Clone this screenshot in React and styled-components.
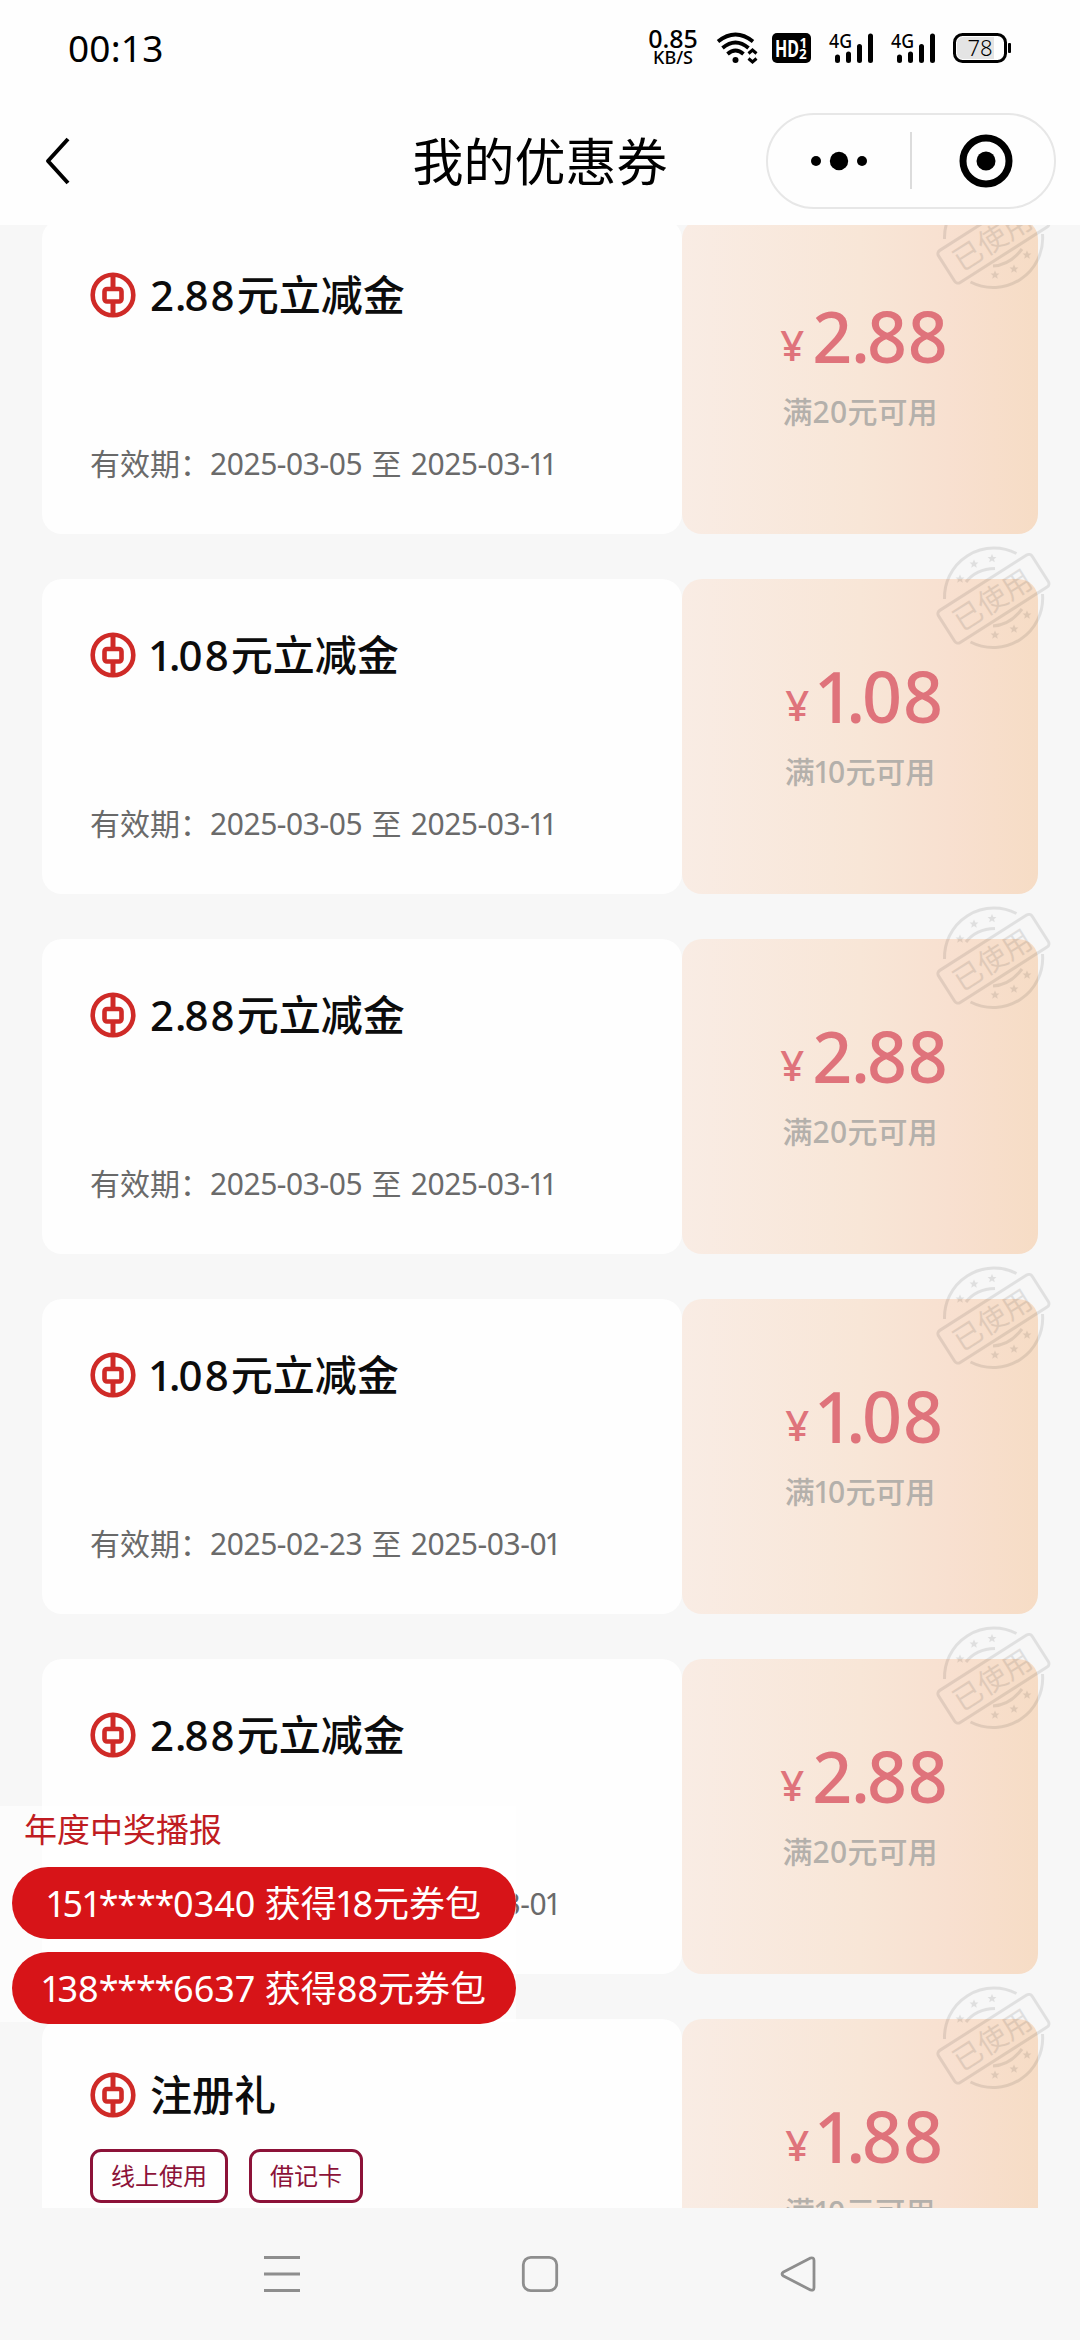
import React from 'react';
import styled, { createGlobalStyle } from 'styled-components';

const GlobalStyle = createGlobalStyle`
	* {
		box-sizing: border-box;
	}
	body {
		margin: 0;
		background: #f7f7f7;
		font-family: 'Noto Sans', 'Noto Sans CJK SC', sans-serif;
	}
`;

const Screen = styled.div`
	width: 1080px;
	height: 2340px;
	display: flex;
	flex-direction: column;
	position: relative;
	overflow: hidden;
	background: #f7f7f7;
`;

const StatusBar = styled.div`
	height: 96px;
	flex: none;
	display: flex;
	align-items: center;
	padding: 0 68px 0 68px;
	background: #fefefe;
	color: #000;
`;

const Clock = styled.span`
	font-size: 37px;
	line-height: 40px;
	letter-spacing: 0.2px;
	flex: 1;
`;

const StatusIcons = styled.div`
	display: flex;
	align-items: center;
`;

const Speed = styled.div`
	width: 52px;
	margin-right: 18px;
	display: flex;
	flex-direction: column;
	align-items: center;
	font-weight: 500;
	font-size: 25px;
	line-height: 19px;

	small {
		font-size: 18px;
		line-height: 19px;
	}
`;

const StatusIcon = styled.svg`
	display: block;
	height: 32px;
	width: ${({ $w }) => $w}px;
	margin-right: ${({ $gap = 0 }) => $gap}px;
	overflow: visible;
`;

const Header = styled.header`
	height: 129px;
	flex: none;
	display: grid;
	grid-template-columns: 1fr auto 1fr;
	align-items: center;
	padding: 0 24px 0 44px;
	background: #fefefe;
`;

const BackIcon = styled.svg`
	display: block;
	width: 28px;
	height: 50px;
`;

const PageTitle = styled.h1`
	margin: 1px 20px 0 0;
	font-size: 51px;
	line-height: 60px;
	font-weight: 400;
	color: #000;
`;

const Capsule = styled.div`
	justify-self: end;
	width: 290px;
	height: 96px;
	display: grid;
	grid-template-columns: 1fr 2px 1fr;
	align-items: center;
	justify-items: center;
	border: 2px solid #e7e7e7;
	border-radius: 48px;

	svg:last-child {
		margin-left: 5px;
	}
`;

const CapsuleLine = styled.span`
	width: 2px;
	height: 57px;
	background: #dcdcdc;
`;

const List = styled.main`
	flex: 1;
	min-height: 0;
	overflow: hidden;
	display: flex;
	flex-direction: column;
	gap: 45px;
	padding: 0 42px;
`;

const Ticket = styled.article`
	position: relative;
	display: flex;
	flex: none;
	height: 315px;

	/* the list is scrolled a few pixels under the header */
	&:first-child {
		margin-top: -6px;
	}
`;

const Info = styled.div`
	width: 640px;
	padding: 48px 48px 0;
	display: flex;
	flex-direction: column;
	border-radius: 20px;
	background: #fefefe;
`;

const TitleRow = styled.div`
	display: flex;
	align-items: center;
	gap: 14px;
	height: 55px;
`;

const Logo = styled.svg`
	width: 46px;
	height: 46px;
	flex: none;
`;

const Name = styled.h2`
	margin: 0;
	font-size: 42px;
	line-height: 55px;
	font-weight: 500;
	color: #0c0c0c;
	white-space: nowrap;
`;

const Validity = styled.p`
	margin: auto 0 48px;
	font-size: 30px;
	line-height: 44px;
	word-spacing: 1.5px;
	color: #6a6a6a;
	white-space: nowrap;
`;

/* proportional figures: narrow 1, tight dot and asterisk */
const Figures = styled.span`
	letter-spacing: ${({ $track = 0 }) => $track}em;
`;

const One = styled.span`
	margin: 0 -0.09em 0 -0.05em;
`;

const Dot = styled.span`
	margin: 0 -0.045em 0 -0.03em;
	letter-spacing: 0;
`;

const Asterisk = styled.span`
	margin-right: -0.035em;
`;

const Tags = styled.div`
	display: flex;
	gap: 21px;
	margin-top: 27px;
`;

const Tag = styled.span`
	height: 54px;
	padding: 0 18px;
	border: 3px solid #8c1238;
	border-radius: 11px;
	font-size: 24px;
	line-height: 48px;
	color: #8c1238;
`;

const Worth = styled.div`
	flex: 1;
	display: flex;
	flex-direction: column;
	align-items: center;
	padding-top: 71px;
	border-radius: 20px;
	background: linear-gradient(90deg, #f9ece4 0%, #f8e6d7 50%, #f8e0d0 75%, #f6dcc5 100%);
`;

const Amount = styled.div`
	padding-left: 9px;
	font-size: 70px;
	line-height: 92px;
	font-weight: 500;
	color: #df737b;
	white-space: nowrap;

	small {
		position: relative;
		top: -2px;
		margin-right: 8px;
		font-size: 42px;
	}
`;

const Condition = styled.p`
	margin: -3px 0 0;
	font-size: 30px;
	line-height: 44px;
	font-weight: 500;
	color: #b4b0ab;
`;

const StampMark = styled.svg`
	position: absolute;
	top: -34px;
	right: -14px;
	width: 120px;
	height: 106px;
`;

const Broadcast = styled.aside`
	position: absolute;
	left: 0;
	top: 1806px;
	width: 516px;
	height: 216px;
	padding-left: 12px;
	display: flex;
	flex-direction: column;
	background: rgba(255, 255, 255, 0.65);
`;

const BroadcastTitle = styled.div`
	padding-left: 12px;
	margin-bottom: 13px;
	font-size: 33px;
	line-height: 48px;
	color: #c01c22;
`;

const Pill = styled.div`
	height: 72px;
	flex: none;
	margin-bottom: 13px;
	border-radius: 36px;
	background: #d71418;
	color: #fff;
	font-size: 36px;
	line-height: 73px;
	text-align: center;
	white-space: nowrap;
`;

const NavBar = styled.nav`
	height: 132px;
	flex: none;
	display: flex;
	justify-content: center;
	align-items: center;
	gap: 218px;
	background: #f7f7f7;
`;

const NavIcon = styled.svg`
	width: 40px;
	height: 40px;
	fill: none;
	stroke: #8e8e8e;
	stroke-width: 2.8;
`;

const tickets = [
	{ name: '元立减金', value: '2.88', min: 20, from: '2025-03-05', to: '2025-03-11' },
	{ name: '元立减金', value: '1.08', min: 10, from: '2025-03-05', to: '2025-03-11' },
	{ name: '元立减金', value: '2.88', min: 20, from: '2025-03-05', to: '2025-03-11' },
	{ name: '元立减金', value: '1.08', min: 10, from: '2025-02-23', to: '2025-03-01' },
	{ name: '元立减金', value: '2.88', min: 20, from: '2025-02-23', to: '2025-03-01' },
	{ name: '注册礼', value: '1.88', min: 10, tags: ['线上使用', '借记卡'] },
];

const winners = ['151****0340 获得18元券包', '138****6637 获得88元券包'];

const starPoints = '0,-4.5 1.3,-1.5 4.4,-1.4 2,0.7 2.8,3.8 0,2 -2.8,3.8 -2,0.7 -4.4,-1.4 -1.3,-1.5';

const stars = [
	[28, 34],
	[42, 19],
	[60, 13.5],
	[63, 90],
	[82, 84],
	[95, 70],
];

const narrow = { 1: One, '.': Dot, '*': Asterisk };

function Num({ children, track }) {
	return (
		<Figures $track={track}>
			{String(children)
				.split(/([1.*])/)
				.map((part, i) => {
					const Glyph = narrow[part];
					return Glyph ? <Glyph key={i}>{part}</Glyph> : part;
				})}
		</Figures>
	);
}

function BankLogo() {
	return (
		<Logo viewBox="0 0 46 46" fill="none" stroke="#cf2a27">
			<circle cx="23" cy="23" r="20.3" strokeWidth="4.6" />
			<rect x="14.5" y="17" width="17" height="12.5" rx="2.5" strokeWidth="4.6" />
			<path d="M23 3v13M23 30v13" strokeWidth="5" />
		</Logo>
	);
}

function Stamp() {
	return (
		<StampMark viewBox="0 0 120 106">
			<g opacity="0.085" fill="none" stroke="#000" strokeWidth="3">
				<path d="M84.5 8.5A49.5 49.5 0 0 0 12.5 54" />
				<path d="M38.5 97A49.5 49.5 0 0 0 110.5 49" />
				<path d="M34 37Q44 24 63 23.5" />
				<path d="M61 81Q78 80 90 64" />
				<rect x="6" y="35" width="111" height="38" rx="4" transform="rotate(-32.5 61 54)" />
			</g>
			<g fill="#000" opacity="0.09">
				{stars.map(([x, y]) => (
					<polygon key={`${x}-${y}`} points={starPoints} transform={`translate(${x} ${y})`} />
				))}
			</g>
			<text
				x="60"
				y="65"
				textAnchor="middle"
				fontSize="29"
				fill="#000"
				opacity="0.09"
				transform="rotate(-32.5 61 54)"
			>
				已使用
			</text>
		</StampMark>
	);
}

function Signal({ gap }) {
	return (
		<StatusIcon $w={45} $gap={gap} viewBox="0 0 45 32">
			<text x="0" y="16" fontSize="20" fontWeight="500" textLength="23" lengthAdjust="spacingAndGlyphs">
				4G
			</text>
			<g stroke="#000" strokeWidth="5" strokeLinecap="round">
				<path d="M8.5 25v3.500M19.5 22v6.500M30.5 14.5v14M41.5 4v24.5" />
			</g>
		</StatusIcon>
	);
}

function Coupon({ ticket }) {
	return (
		<Ticket>
			<Info>
				<TitleRow>
					<BankLogo />
					<Name>
						{!ticket.tags && <Num track={0.05}>{ticket.value}</Num>}
						{ticket.name}
					</Name>
				</TitleRow>
				{ticket.tags && (
					<Tags>
						{ticket.tags.map((tag) => (
							<Tag key={tag}>{tag}</Tag>
						))}
					</Tags>
				)}
				{ticket.from && (
					<Validity>
						有效期：<Num track={-0.015}>{ticket.from}</Num> 至 <Num track={-0.015}>{ticket.to}</Num>
					</Validity>
				)}
			</Info>
			<Worth>
				<Amount>
					<small>¥</small>
					<Num track={0.012}>{ticket.value}</Num>
				</Amount>
				<Condition>
					满<Num track={0.01}>{ticket.min}</Num>元可用
				</Condition>
			</Worth>
			<Stamp />
		</Ticket>
	);
}

export default function App() {
	return (
		<Screen>
			<GlobalStyle />
			<StatusBar>
				<Clock>00:13</Clock>
				<StatusIcons>
					<Speed>
						0.85
						<small>KB/S</small>
					</Speed>
					<StatusIcon $w={40} $gap={15} viewBox="0 0 40 32">
						<g fill="none" stroke="#000" strokeWidth="3.8">
							<path d="M1 9.5Q18.5 -4.5 36 9.5" />
							<path d="M5.5 16Q18.5 5 31.5 16" />
							<path d="M10.5 22Q18.5 15 26.5 22" />
							<path d="M31.5 21.500l4-3.500 4 3.500M31.5 26.500l4 3.500 4-3.500" strokeWidth="3" />
						</g>
						<circle cx="18.5" cy="28" r="3" />
					</StatusIcon>
					<StatusIcon $w={39} $gap={18} viewBox="0 0 39 32">
						<rect y="1" width="39" height="30" rx="5" />
						<g fill="#fff" fontWeight="700">
							<text x="3" y="24.5" fontSize="23" textLength="24" lengthAdjust="spacingAndGlyphs">HD</text>
							<text x="27.5" y="15.5" fontSize="13.5">1</text>
							<text x="27" y="27" fontSize="13.5">2</text>
						</g>
					</StatusIcon>
					<Signal gap={17} />
					<Signal gap={17} />
					<StatusIcon $w={59} viewBox="0 0 59 32">
						<rect x="1.5" y="2.5" width="51" height="27" rx="8" fill="#fefefe" stroke="#000" strokeWidth="3" />
						<path d="M10 5h31v22H10a6 6 0 0 1-6-6V11a6 6 0 0 1 6-6z" fill="#e4e4e4" />
						<rect x="55" y="11" width="3" height="10" rx="1" />
						<text x="27" y="24" fontSize="22" fontWeight="300" textAnchor="middle">78</text>
					</StatusIcon>
				</StatusIcons>
			</StatusBar>

			<Header>
				<BackIcon viewBox="0 0 28 50" fill="none" stroke="#000" strokeWidth="4" strokeLinejoin="round">
					<path d="M24 3L4 25l20 22" />
				</BackIcon>
				<PageTitle>我的优惠券</PageTitle>
				<Capsule>
					<svg width="60" height="20" viewBox="0 0 60 20">
						<circle cx="7" cy="10" r="5" />
						<circle cx="30" cy="10" r="9.2" />
						<circle cx="53" cy="10" r="5" />
					</svg>
					<CapsuleLine />
					<svg width="54" height="54" viewBox="0 0 54 54">
						<circle cx="27" cy="27" r="23" fill="none" stroke="#000" strokeWidth="7" />
						<circle cx="27" cy="27" r="9.5" />
					</svg>
				</Capsule>
			</Header>

			<List>
				{tickets.map((ticket, i) => (
					<Coupon key={i} ticket={ticket} />
				))}
			</List>

			<Broadcast>
				<BroadcastTitle>年度中奖播报</BroadcastTitle>
				{winners.map((text) => (
					<Pill key={text}>
						<Num>{text}</Num>
					</Pill>
				))}
			</Broadcast>

			<NavBar>
				<NavIcon viewBox="0 0 40 40">
					<path d="M2 3.5h36M2 20h36M2 36.5h36" />
				</NavIcon>
				<NavIcon viewBox="0 0 40 40">
					<rect x="3.3" y="3.3" width="33.4" height="33.4" rx="7.5" />
				</NavIcon>
				<NavIcon viewBox="0 0 40 40" strokeLinejoin="round">
					<path d="M32.5 4L5.5 18Q2.5 20 5.5 22L32.5 36Q36 37 36 33.500V6.500Q36 3 32.5 4z" />
				</NavIcon>
			</NavBar>
		</Screen>
	);
}
